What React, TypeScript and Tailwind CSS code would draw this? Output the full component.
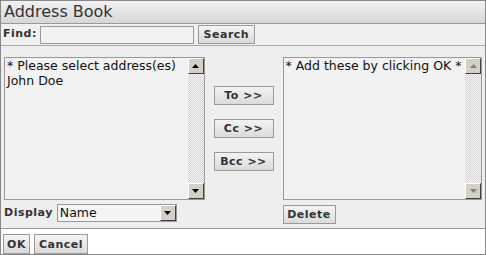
import React from 'react';

const font = { fontFamily: '"DejaVu Sans", Verdana, sans-serif' };

function Btn({ label, className = '' }: { label: string; className?: string }) {
  return (
    <button
      className={`h-[19px] border border-[#9a9a9a] bg-gradient-to-b from-[#f4f4f4] to-[#dadada] text-[11px] font-bold leading-none tracking-[0.5px] text-[#333] ${className}`}
    >
      {label}
    </button>
  );
}

function Arrow({ up, disabled }: { up?: boolean; disabled?: boolean }) {
  return (
    <div className="flex h-4 w-4 items-center justify-center border border-t-[#fff] border-l-[#fff] border-r-[#404040] border-b-[#404040] bg-[#d4d0c8]">
      <svg width="7" height="4" viewBox="0 0 7 4">
        <path d={up ? 'M3.5 0 L7 4 L0 4 Z' : 'M0 0 L7 0 L3.5 4 Z'} fill={disabled ? '#808080' : '#000'} />
      </svg>
    </div>
  );
}

function ListBox({ items, disabled }: { items: string[]; disabled?: boolean }) {
  return (
    <div className="flex h-[143px] border border-[#999] bg-[#f2f2f2]">
      <div className="min-w-0 flex-1 px-[2px] text-[12.5px] leading-[15px] text-[#111]">
        {items.map((t) => (
          <div key={t} className="whitespace-nowrap">{t}</div>
        ))}
      </div>
      <div className="flex w-4 shrink-0 flex-col justify-between bg-[repeating-conic-gradient(#d4d4d4_0_25%,#f6f6f6_0_50%)] bg-[length:2px_2px]">
        <Arrow up disabled={disabled} />
        <Arrow disabled={disabled} />
      </div>
    </div>
  );
}

export default function App() {
  return (
    <div className="w-[486px] h-[255px] border border-[#888] bg-[#eeeeee] flex flex-col" style={font}>
      {/* Title */}
      <div className="h-[23px] border-b border-[#999] bg-gradient-to-b from-[#f2f2f2] to-[#d6d6d6] px-[3px] text-[16px] leading-[22px] text-[#333]">
        Address Book
      </div>

      {/* Find row */}
      <div className="flex h-[22px] items-center border-b border-[#aaa] bg-[#f0f0f0] pl-[2px]">
        <span className="text-[11px] font-bold tracking-[0.5px] text-[#333]">Find:</span>
        <input className="ml-[3px] h-[18px] w-[154px] border border-[#999] bg-[#f2f2f2] outline-none" />
        <Btn label="Search" className="ml-[4px] w-[57px]" />
      </div>

      {/* Main */}
      <div className="flex flex-1 border-b border-[#999] px-[3px] pt-[11px]">
        <div className="flex w-[201px] flex-col">
          <ListBox items={['* Please select address(es)', 'John Doe']} />
          <div className="mt-[4px] flex items-center">
            <span className="text-[11px] font-bold tracking-[0.5px] text-[#333]">Display</span>
            <div className="ml-[4px] flex h-[18px] w-[120px] items-center border border-[#999] bg-[#f4f4f4]">
              <span className="flex-1 pl-[2px] text-[12.5px] leading-none text-[#111]">Name</span>
              <Arrow />
            </div>
          </div>
        </div>

        <div className="ml-[9px] flex w-[60px] flex-col gap-[14px] pt-[29px]">
          <Btn label="To >>" className="w-[60px]" />
          <Btn label="Cc >>" className="w-[60px]" />
          <Btn label="Bcc >>" className="w-[60px]" />
        </div>

        <div className="ml-[9px] flex w-[200px] flex-col">
          <ListBox items={['* Add these by clicking OK *']} disabled />
          <div className="mt-[5px] flex">
            <Btn label="Delete" className="w-[53px]" />
          </div>
        </div>
      </div>

      {/* Footer */}
      <div className="flex h-[25px] items-end gap-[4px] bg-white pl-[2px]">
        <Btn label="OK" className="w-[27px] h-[20px]" />
        <Btn label="Cancel" className="w-[54px] h-[20px]" />
      </div>
    </div>
  );
}
